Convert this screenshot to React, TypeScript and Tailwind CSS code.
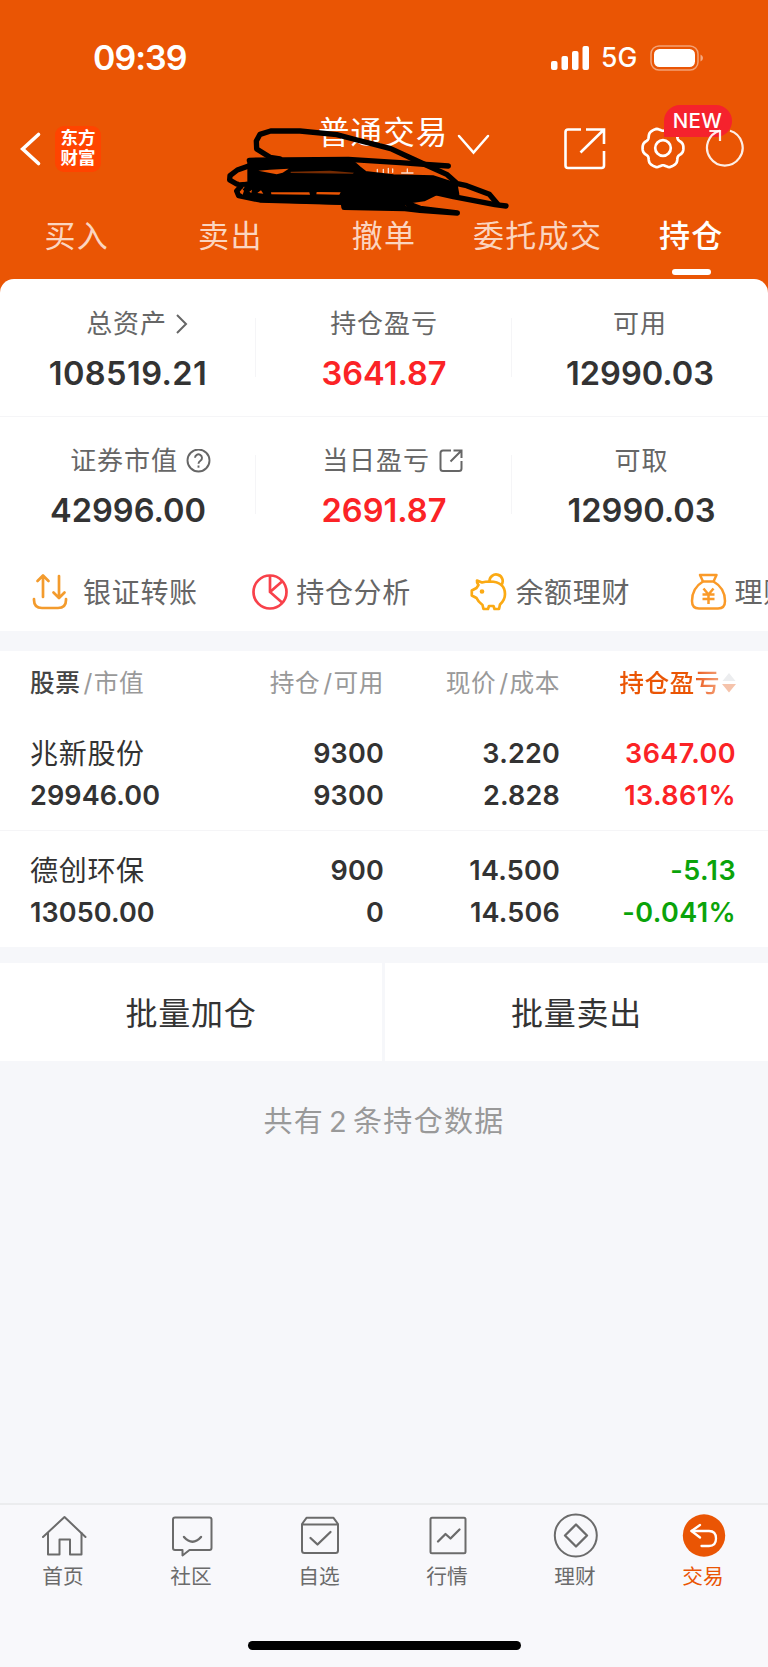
import type { ReactNode } from 'react'
import clsx from 'clsx'

const tabs = ['买入', '卖出', '撤单', '委托成交', '持仓']

interface Holding {
  name: string
  value: string
  amount: string
  available: string
  price: string
  cost: string
  profit: string
  percent: string
  up: boolean
}

const holdings: Holding[] = [
  { name: '兆新股份', value: '29946.00', amount: '9300', available: '9300', price: '3.220', cost: '2.828', profit: '3647.00', percent: '13.861%', up: true },
  { name: '德创环保', value: '13050.00', amount: '900', available: '0', price: '14.500', cost: '14.506', profit: '-5.13', percent: '-0.041%', up: false },
]

// Six broad lobes around (22, 22), with narrow notches between them
const gearPath =
  Array.from({ length: 90 }, (_, i) => {
    const a = (i / 90) * Math.PI * 2
    const r = 20.4 - 3.2 * Math.pow((1 - Math.cos(6 * a)) / 2, 2)
    return `${i === 0 ? 'M' : 'L'}${(22 + r * Math.cos(a)).toFixed(2)} ${(22 + r * Math.sin(a)).toFixed(2)}`
  }).join(' ') + 'Z'

function StatusBar() {
  return (
    <div className="flex h-[115px] items-center pl-[93px] pr-[64px] text-white">
      <span className="text-[34px] leading-none font-semibold tracking-[-1px]">09:39</span>
      <div className="ml-auto flex items-center">
        <svg width="40" height="26" viewBox="0 0 40 26" fill="currentColor">
          <rect x="1" y="16" width="6.5" height="9" rx="2" />
          <rect x="11.5" y="11" width="6.5" height="14" rx="2" />
          <rect x="22" y="6" width="6.5" height="19" rx="2" />
          <rect x="32.5" y="1" width="6.5" height="24" rx="2" />
        </svg>
        <span className="ml-[11px] w-[38px] text-[26.5px] leading-none font-medium">5G</span>
        <svg className="ml-[11px]" width="54" height="26" viewBox="0 0 54 26" fill="none">
          <rect x="1" y="1" width="47" height="24" rx="8" stroke="#fff" strokeOpacity="0.45" strokeWidth="1.5" />
          <rect x="4" y="4" width="41" height="18" rx="5.5" fill="#fff" />
          <path d="M50.500 9.500q2.500 1 2.500 3.500t-2.500 3.500z" fill="#fff" fillOpacity="0.5" />
        </svg>
      </div>
    </div>
  )
}

// Pen strokes covering the account name
function Scribble() {
  return (
    <svg className="absolute top-[105px] left-[220px]" width="300" height="120" viewBox="0 0 900 360" fill="none" strokeLinecap="round" strokeLinejoin="round">
      <path d="M472 193v10M490 193v12M505 190v14M518 192v10M545 204h34M562 192v12" stroke="#fff" strokeOpacity="0.8" strokeWidth="4" />
      <g stroke="#000" strokeWidth="16">
        <path d="M180 162L150 157L110 132L109 108L120 88L152 78H240L350 89L400 102L512 131L605 174L680 208L712 236L740 242L808 268L832 296" />
        <path d="M858 303L825 299L700 275L650 264" />
        <path d="M88 166L385 163L540 173L685 183" />
        <path d="M88 182L52 195L30 212L29 225L50 237L90 238" />
        <path d="M62 245L50 258L56 272L120 285L370 292L372 307L555 311L600 316L712 324L600 310L560 295" />
        <path
          fill="#000"
          d="M90 170L390 168L415 190L435 206L520 216L640 219L705 240L710 268L650 262L612 281L560 288L540 305L375 300L365 291L120 283L72 262L90 238Z"
        />
      </g>
      <g fill="#ea5504">
        <path d="M115 197L170 208L188 203L206 191L150 194Z" />
        <path d="M212 200L330 197L402 203L398 206L212 204Z" opacity="0.5" />
        <path d="M153 262H268L270 269L154 268Z" />
        <path d="M290 261L362 262L358 269L289 268Z" />
        <path d="M66 252L72 257L68 269L61 263Z" />
        <path d="M88 260L96 254L94 264ZM112 264L123 256L130 266Z" />
        <path d="M44 217L77 199V230L58 232Z" />
      </g>
    </svg>
  )
}

function NavBar() {
  return (
    <div className="flex h-[67px] items-center pl-[20px] text-white">
      <svg width="22" height="36" viewBox="0 0 22 36" fill="none" stroke="currentColor" strokeWidth="3.6" strokeLinecap="round">
        <path d="M18.500 3.500L2.700 18L18.500 32.500" />
      </svg>
      <div className="ml-[13px] flex h-[46px] w-[46px] flex-col items-center justify-center rounded-[9px] bg-[#ff4400] pb-[2px] text-[17.5px] leading-[19.5px] font-bold">
        <span>东方</span>
        <span>财富</span>
      </div>
      <div className="ml-[217px] flex h-[67px] items-start">
        <span className="mt-[2px] text-[31.5px] leading-[32px] tracking-[1.1px]">普通交易</span>
        <svg className="mt-[18px] ml-[8px]" width="34" height="22" viewBox="0 0 34 22" fill="none" stroke="currentColor" strokeWidth="2.5" strokeLinecap="round">
          <path d="M3 3L17.500 19.500L32 3" />
        </svg>
      </div>
      <svg className="absolute top-[126px] left-[562px]" width="46" height="46" viewBox="0 0 46 46" fill="none" stroke="currentColor" strokeWidth="2.6">
        <path d="M19 3.500H6q-2.500 0-2.500 2.500V39.500q0 2.500 2.500 2.500H39.500q2.500 0 2.500-2.500V25" />
        <path d="M24 3.500H42V18M42 3.500L18.500 26.500" />
      </svg>
      <svg className="absolute top-[126px] left-[641px]" width="44" height="44" viewBox="0 0 44 44" fill="none" stroke="currentColor" strokeWidth="2.7" strokeLinejoin="round">
        <path d={gearPath} />
        <circle cx="22" cy="22" r="7.800" />
      </svg>
      <div className="absolute top-[105px] left-[664px] flex h-[32px] w-[68px] items-center justify-center rounded-[16px] rounded-bl-none bg-[#f5222d] pr-px text-[20.5px] leading-none font-medium tracking-[0.4px]">
        NEW
      </div>
      <svg className="absolute top-[126px] left-[704px]" width="42" height="42" viewBox="0 0 42 42" fill="none" stroke="currentColor" strokeWidth="2.2" strokeOpacity="0.9">
        <path d="M26 4.700A17.800 17.800 0 1 1 16 4.600" />
        <path d="M5.300 5H16V15" />
      </svg>
      <Scribble />
    </div>
  )
}

function Tabs() {
  return (
    <div className="grid h-[97px] grid-cols-5">
      {tabs.map((tab) => {
        const active = tab === '持仓'
        return (
          <div key={tab} className="flex flex-col items-center pt-[38px]">
            <span className={clsx('text-[31px] leading-[32px] tracking-[1.3px] whitespace-nowrap', active ? 'font-medium text-white' : 'text-[#fbd5c0]')}>{tab}</span>
            {active && <span className="mt-[17px] h-[6px] w-[39px] rounded-full bg-white" />}
          </div>
        )
      })}
    </div>
  )
}

interface StatProps {
  label: string
  value: string
  red?: boolean
  divider?: boolean
  icon?: ReactNode
  className?: string
  valueClassName?: string
}

function Stat({ label, value, red, divider, icon, className, valueClassName }: StatProps) {
  return (
    <div className="flex items-start">
      <div className={clsx('flex flex-1 flex-col items-center', className)}>
        <div className="flex h-[28px] items-center text-[26px] leading-none tracking-[0.9px] text-[#666]">
          {label}
          {icon}
        </div>
        <div className={clsx('mt-[18px] text-[32.6px] leading-[34px] font-semibold', red ? 'text-[#fb2326]' : 'text-[#333]', valueClassName)}>{value}</div>
      </div>
      {divider && <div className="mt-[8px] -ml-px h-[59px] w-px bg-[#f5f5f7]" />}
    </div>
  )
}

function Summary() {
  return (
    <div>
      <div className="grid h-[138px] grid-cols-3 border-b border-[#f5f5f7] pt-[31px]">
        <Stat
          label="总资产"
          value="108519.21"
          valueClassName="tracking-[0.4px]"
          divider
          icon={
            <svg className="-mr-[19px] ml-[8px]" width="14" height="22" viewBox="0 0 14 22" fill="none" stroke="currentColor" strokeWidth="2">
              <path d="M2 2L11 11L2 20" />
            </svg>
          }
        />
        <Stat label="持仓盈亏" value="3641.87" red divider />
        <Stat label="可用" value="12990.03" />
      </div>
      <div className="grid h-[132px] grid-cols-3 pt-[30px]">
        <Stat
          label="证券市值"
          value="42996.00"
          divider
          icon={
            <span className="-mr-[25px] ml-[8px] flex">
              <svg width="25" height="25" viewBox="0 0 25 25" fill="none" stroke="currentColor" strokeWidth="1.9">
                <circle cx="12.500" cy="11.500" r="11" />
                <path d="M9 8.800a3.500 3.500 0 1 1 5.400 3q-1.900 1.200-1.900 3" />
                <path d="M12.500 16.500v2.200" />
              </svg>
            </span>
          }
        />
        <Stat
          label="当日盈亏"
          value="2691.87"
          red
          divider
          icon={
            <span className="-mr-[17px] ml-[9px] flex">
              <svg width="24" height="24" viewBox="0 0 24 24" fill="none" stroke="currentColor" strokeWidth="2">
                <path d="M12 1.500H4Q1.500 1.500 1.500 4v15.500Q1.500 22 4 22h16q2.500 0 2.500-2.500V12" />
                <path d="M14.500 1.500H22.500V9M22.500 1.500L11.500 12.500" />
              </svg>
            </span>
          }
        />
        <Stat label="可取" value="12990.03" className="pl-[3px]" />
      </div>
    </div>
  )
}

function QuickAction({ icon, label, wide }: { icon: ReactNode; label: string; wide?: boolean }) {
  return (
    <div className="flex w-[219.2px] shrink-0 items-center">
      {icon}
      <span className={clsx('pt-[2px] text-[28px] leading-none tracking-[0.7px] text-[#666]', wide ? 'ml-[13px]' : 'ml-[7px]')}>{label}</span>
    </div>
  )
}

function QuickActions() {
  return (
    <div className="flex h-[82px] items-center overflow-hidden pt-[4px] pl-[32px] whitespace-nowrap">
      <QuickAction
        wide
        label="银证转账"
        icon={
          <svg width="38" height="38" viewBox="0 0 38 38" fill="none" stroke="#f39b2d" strokeWidth="2.7" strokeLinecap="round" strokeLinejoin="round">
            <path d="M2 26v1q0 8 8 8h16q8 0 8-8v-1" />
            <path d="M11 24V3M5.500 8L11 2.500L16.500 8" />
            <path d="M27 3v21M21.500 19.500L27 25l5.500-5.500" />
          </svg>
        }
      />
      <QuickAction
        label="持仓分析"
        icon={
          <svg width="38" height="38" viewBox="0 0 38 38" fill="none" stroke="#f8414a" strokeWidth="2.7">
            <circle cx="19" cy="19" r="16.500" />
            <path d="M19 2.500V19L31 29.500M19 19L31 8.500" />
          </svg>
        }
      />
      <QuickAction
        label="余额理财"
        icon={
          <svg width="38" height="38" viewBox="0 0 38 38" fill="none" stroke="#fbaa14" strokeWidth="2.7" strokeLinejoin="round">
            <path d="M7 7.500L12 9.500Q15 8.500 20 8.500Q35 9 35 21Q35 27 30 31.500L29 36H24.500L23.500 33H19L18 36H13.500L12.500 32Q8 28.500 6.500 25L1.800 22.500V17.500L6.500 15L8.500 12Q6.500 10 7 7.500Z" />
            <path d="M19.500 8.500A6.600 6.600 0 1 1 31 12.500" />
            <circle cx="12" cy="18.500" r="1" fill="#fbaa14" />
          </svg>
        }
      />
      <QuickAction
        label="理财"
        icon={
          <svg width="38" height="38" viewBox="0 0 38 38" fill="none" stroke="#fa9a28" strokeWidth="2.5" strokeLinejoin="round">
            <path d="M10 2H26.500L23.500 8.500H13Z" />
            <path d="M13 8.500Q2 15 2 28Q2 35.500 9 35.500H28Q35 35.500 35 28Q35 15 23.500 8.500" />
            <path d="M13.500 15.500L18.500 21.500L23.500 15.500M18.500 21.500V31M12.500 21.500H24.500M12.500 26H24.500" />
          </svg>
        }
      />
    </div>
  )
}

const columns = 'grid grid-cols-[201px_153px_176px_176px]'

function Slash() {
  return <span className="mr-px ml-[3px]">/</span>
}

function HoldingsTable() {
  return (
    <div className="bg-white pl-[30px]">
      <div className={clsx(columns, 'h-[64px] items-center pt-px text-right text-[24.7px] leading-none tracking-[0.5px] whitespace-nowrap text-[#999]')}>
        <div className="text-left">
          <span className="font-medium text-[#444]">股票</span>
          <Slash />
          市值
        </div>
        <div>
          持仓
          <Slash />
          可用
        </div>
        <div>
          现价
          <Slash />
          成本
        </div>
        <div className="flex items-center justify-end">
          <span className="bg-linear-to-r from-[#ea5504] from-75% to-[#f2a177] bg-clip-text font-medium text-transparent">持仓盈亏</span>
          <svg className="ml-[2px]" width="14" height="22" viewBox="0 0 14 22">
            <path d="M7 1L13.500 9H0.500Z" fill="#ecedef" />
            <path d="M0 12H14L7 20.500Z" fill="#f5c3ab" />
          </svg>
        </div>
      </div>
      {holdings.map((item, i) => (
        <div
          key={item.name}
          className={clsx(columns, 'relative h-[116px] text-right text-[27px] leading-[42px] font-semibold text-[#333]', i === 0 ? 'pt-[18px]' : 'pt-[19px]')}
        >
          {i > 0 && <div className="absolute -top-px -left-[30px] h-px w-[768px] bg-[#f5f5f7]" />}
          <div className="text-left">
            <div className="text-[28px] font-normal tracking-[0.7px]">{item.name}</div>
            <div className="tracking-[0.1px]">{item.value}</div>
          </div>
          <div className="tracking-[0.2px]">
            <div>{item.amount}</div>
            <div>{item.available}</div>
          </div>
          <div className="tracking-[0.2px]">
            <div>{item.price}</div>
            <div>{item.cost}</div>
          </div>
          <div className={clsx('tracking-[0.4px]', item.up ? 'text-[#fb2326]' : 'text-[#0aa30a]')}>
            <div>{item.profit}</div>
            <div>{item.percent}</div>
          </div>
        </div>
      ))}
    </div>
  )
}

function NavItem({ label, active, children }: { label: string; active?: boolean; children: ReactNode }) {
  return (
    <div className={clsx('flex flex-col items-center pt-[9px]', active ? 'text-[#ea5504]' : 'text-[#6b6b6b]')}>
      <svg className="overflow-visible" width="44" height="44" viewBox="0 0 44 44" fill="none" stroke="currentColor" strokeWidth="2" strokeLinejoin="round" strokeLinecap="round">
        {children}
      </svg>
      <span className="mt-[8px] -ml-[2px] text-[20.7px] leading-[22px]">{label}</span>
    </div>
  )
}

function BottomNav() {
  return (
    <div className="mt-auto border-t-2 border-[#ebecee] bg-[#f8f8fb]">
      <div className="grid h-[136px] grid-cols-6">
        <NavItem label="首页">
          <path d="M1 23L22.500 3L43.500 23" />
          <path d="M6 19V40.500H17.500V25.500H28V40.500H39.500V19" />
        </NavItem>
        <NavItem label="社区">
          <path d="M5 3.500H39.500Q41.500 3.500 41.500 5.500V34Q41.500 36 39.500 36H19.500L12.500 41.500V36H5Q3 36 3 34V5.500Q3 3.500 5 3.500Z" />
          <path d="M14 23Q22.500 32.500 31 23" strokeWidth="2.4" />
        </NavItem>
        <NavItem label="自选">
          <path d="M4 10L8.500 3.800H35.500L40 10V36.500Q40 39 37.500 39H6.500Q4 39 4 36.500ZM4 10.500H40" />
          <path d="M12.500 24L19.500 30.500L32.500 18" strokeWidth="2.3" />
        </NavItem>
        <NavItem label="行情">
          <rect x="4.500" y="3.700" width="35" height="35.500" rx="1.500" />
          <path d="M12 27.500L19.500 20L24.500 24.500L33.500 15.500" strokeWidth="2.3" />
        </NavItem>
        <NavItem label="理财">
          <circle cx="21.800" cy="21.500" r="21" />
          <path d="M22 10.500L33 21.500L22 32.500L11 21.500Z" strokeWidth="2.3" />
        </NavItem>
        <NavItem label="交易" active>
          <circle cx="22" cy="21.500" r="21.200" fill="currentColor" stroke="none" />
          <g stroke="#fff" strokeWidth="2.3">
            <path d="M18 11L9.500 17L18 23.500" />
            <path d="M9.500 17H27Q34 17 34 24.500Q34 32 27 32H19.500" />
          </g>
        </NavItem>
      </div>
      <div className="mb-[17px] ml-[248px] h-[9px] w-[273px] rounded-full bg-black" />
    </div>
  )
}

export default function App() {
  return (
    <div lang="zh-CN" className="relative flex h-[1667px] w-[768px] flex-col overflow-hidden bg-[#f6f7fa] font-[Inter,'Noto_Sans_CJK_SC',sans-serif]">
      <div className="bg-[#ea5504]">
        <StatusBar />
        <NavBar />
        <Tabs />
        <div className="rounded-t-[14px] bg-white">
          <Summary />
          <QuickActions />
        </div>
      </div>
      <div className="h-[20px]" />
      <HoldingsTable />
      <div className="mt-[16px] grid h-[98px] grid-cols-[382px_1fr] gap-[3px] text-center text-[32px] tracking-[0.7px] text-[#333]">
        <button className="bg-white pt-[4px]">批量加仓</button>
        <button className="bg-white pt-[4px]">批量卖出</button>
      </div>
      <p className="mt-[46px] text-center text-[29px] leading-[30px] tracking-[1.3px] text-[#999]">
        共有<span className="mx-[5px]">2</span>条持仓数据
      </p>
      <BottomNav />
    </div>
  )
}
